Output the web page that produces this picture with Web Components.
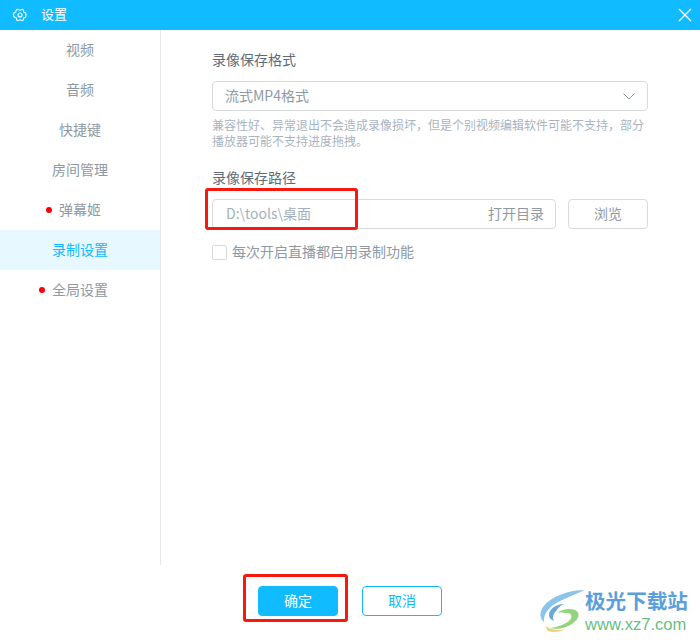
<!DOCTYPE html>
<html lang="zh">
<head>
<meta charset="utf-8">
<title>设置</title>
<style>
    html, body { margin: 0; height: 100%; }
    body { font-family: "Noto Sans CJK SC", "Noto Sans", sans-serif; font-size: 14px; background: #fff; overflow: hidden; }
</style>
</head>
<body>
<settings-dialog>
    <nav-item>视频</nav-item>
    <nav-item>音频</nav-item>
    <nav-item>快捷键</nav-item>
    <nav-item>房间管理</nav-item>
    <nav-item dot>弹幕姬</nav-item>
    <nav-item active>录制设置</nav-item>
    <nav-item dot>全局设置</nav-item>

    <form-group slot="content" label="录像保存格式">
        <format-select value="流式MP4格式"></format-select>
        <p style="margin:6px 0 0;font-size:12px;line-height:16px;color:#a9b4bf;width:436px">兼容性好、异常退出不会造成录像损坏，但是个别视频编辑软件可能不支持，部分播放器可能不支持进度拖拽。</p>
    </form-group>
    <form-group slot="content" label="录像保存路径" style="margin-top:18px">
        <path-picker value="D:\tools\桌面"></path-picker>
        <check-row style="margin-top:15px">每次开启直播都启用录制功能</check-row>
    </form-group>
</settings-dialog>

<script>
class SettingsDialog extends HTMLElement {
    connectedCallback() {
        this.attachShadow({ mode: 'open' });
        this.shadowRoot.innerHTML = `
            <style>
                :host { display: flex; flex-direction: column; position: relative; height: 640px; width: 700px; overflow: hidden; }
                .title { display: flex; align-items: center; box-sizing: border-box; height: 30px; background: #10bcff; color: #fff; flex: none; }
                .gear { margin-left: 13px; width: 14px; height: 14px; }
                .title span { margin-left: 14px; font-size: 13px; line-height: 18px; padding-bottom: 2px; flex: 1; }
                .close { margin-right: 8px; width: 14px; height: 14px; }
                .main { display: flex; height: 535px; flex: none; }
                .side { width: 160px; border-right: 1px solid #e6e8ea; display: flex; flex-direction: column; }
                .content { flex: 1; padding: 19px 52px 0 51px; }
                .foot { flex: 1; display: flex; justify-content: center; gap: 24px; padding-top: 21px; }
                .btn { box-sizing: border-box; width: 80px; height: 30px; border-radius: 4px; border: 1px solid #10bcff; font-size: 14px; display: flex; align-items: center; justify-content: center; padding-bottom: 2px; }
                .ok { background: #10bcff; color: #fff; }
                .cancel { background: #fff; color: #10bcff; }
                .mark { position: absolute; border: 3px solid #f5190f; border-radius: 3px; box-sizing: border-box; }
                .wm { position: absolute; left: 539px; top: 589px; display: flex; }
                .wm div { margin-left: 0; margin-top: -2px; }
                .wm b { display: block; font-size: 20.6px; line-height: 26px; color: #5a9fdc; }
                .wm i { display: block; font: normal 16.6px/18px "Liberation Sans", sans-serif; color: #69bf84; margin-top: 3px; }
            </style>
            <div class="title">
                <svg class="gear" viewBox="0 0 14 14" fill="none" stroke="#fff" stroke-width="1.1">
                    <path d="M4.8 1.3c.7 0 1 .8 2.200.8s1.500-.8 2.200-.8c.6 0 .9.500 1.100.9.300.600 0 1.300.500 1.800.500.500 1.200.400 1.700.800.500.500.500 1.300.500 2.200s0 1.700-.500 2.200c-.500.400-1.200.300-1.700.800s-.200 1.200-.500 1.800c-.200.400-.500.900-1.100.900-.700 0-1-.800-2.200-.800s-1.500.800-2.200.800c-.600 0-.900-.500-1.100-.900-.300-.600 0-1.300-.500-1.800s-1.200-.400-1.700-.800C.5 8.700.5 7.900.5 7s0-1.700.500-2.200c.500-.400 1.200-.300 1.700-.800s.200-1.200.500-1.800c.200-.400.500-.900 1.100-.900z"/>
                    <circle cx="7" cy="7" r="2"/>
                </svg>
                <span>设置</span>
                <svg class="close" viewBox="0 0 14 14" stroke="#fff" stroke-width="1.3"><path d="M1 1l12 12M13 1L1 13"/></svg>
            </div>
            <div class="main">
                <div class="side"><slot></slot></div>
                <div class="content"><slot name="content"></slot></div>
            </div>
            <div class="foot">
                <div class="btn ok">确定</div>
                <div class="btn cancel">取消</div>
            </div>
            <div class="mark" style="left:205px;top:188px;width:153px;height:42px"></div>
            <div class="mark" style="left:243px;top:574px;width:105px;height:48px"></div>
            <div class="wm">
                <svg width="46" height="44" viewBox="0 0 46 44" fill="none">
                    <path d="M46 1C30 1 12 7 4 18c-4 6-3 12 1 15-1-8 5-15 14-20C27 9 37 5 46 1z" fill="#8cc4ec"/>
                    <path d="M25 15c-8 0-15 5-15 11 0 3 2 5 5 6-2-3-1-7 2-10 2-3 5-6 8-7z" fill="#6aa8dc"/>
                    <path d="M18 24c5-4 13-5 18-3 6 3 4 9-3 14-6 4-15 6-22 4 8-1 16-4 20-8 3-4 1-7-3-7-3 0-7-1-10 0z" fill="#93d47c"/>
                    <path d="M7 37c5 4 13 5 20 3-6 3-13 4-18 2-1-1-2-3-2-5z" fill="#ead27a"/>
                </svg>
                <div><b>极光下载站</b><i>www.xz7.com</i></div>
            </div>
        `;
    }
}

class NavItem extends HTMLElement {
    connectedCallback() {
        this.attachShadow({ mode: 'open' });
        this.shadowRoot.innerHTML = `
            <style>
                :host { display: flex; align-items: center; justify-content: center; box-sizing: border-box; height: 40px; padding-bottom: 2px; font-size: 14px; color: #8e99a3; }
                :host([active]) { background: #e7f8ff; color: #10bcff; }
                .wrap { position: relative; }
                .dot { position: absolute; left: -13px; top: 8px; width: 6px; height: 6px; border-radius: 50%; background: #f8000a; }
            </style>
            <div class="wrap">${this.hasAttribute('dot') ? '<span class="dot"></span>' : ''}<slot></slot></div>
        `;
    }
}

class FormGroup extends HTMLElement {
    connectedCallback() {
        this.attachShadow({ mode: 'open' });
        this.shadowRoot.innerHTML = `
            <style>
                :host { display: block; }
                .label { font-size: 14px; line-height: 20px; color: #5f6c78; margin-bottom: 12px; }
            </style>
            <div class="label">${this.getAttribute('label')}</div>
            <slot></slot>
        `;
    }
}

class FormatSelect extends HTMLElement {
    connectedCallback() {
        this.attachShadow({ mode: 'open' });
        this.shadowRoot.innerHTML = `
            <style>
                :host { display: flex; align-items: center; justify-content: space-between; box-sizing: border-box; width: 436px; height: 30px; border: 1px solid #d7dbde; border-radius: 4px; padding: 0 12px; font-size: 14px; color: #8e99a3; }
                span { padding-bottom: 2px; }
            </style>
            <span>${this.getAttribute('value')}</span>
            <svg width="12" height="7" viewBox="0 0 12 7" fill="none" stroke="#8e99a3" stroke-width="1"><path d="M.5.5L6 6l5.500-5.500"/></svg>
        `;
    }
}

class PathPicker extends HTMLElement {
    connectedCallback() {
        this.attachShadow({ mode: 'open' });
        this.shadowRoot.innerHTML = `
            <style>
                :host { display: flex; gap: 12px; width: 436px; font-size: 14px; }
                .input, .browse { box-sizing: border-box; height: 30px; border: 1px solid #d7dbde; border-radius: 4px; display: flex; align-items: center; padding-bottom: 2px; }
                .input { flex: 1; justify-content: space-between; padding-left: 13px; padding-right: 11px; }
                .value { color: #a3afba; }
                .open { color: #8e99a3; }
                .browse { width: 80px; justify-content: center; color: #8e99a3; }
            </style>
            <div class="input"><span class="value">${this.getAttribute('value')}</span><span class="open">打开目录</span></div>
            <div class="browse">浏览</div>
        `;
    }
}

class CheckRow extends HTMLElement {
    connectedCallback() {
        this.attachShadow({ mode: 'open' });
        this.shadowRoot.innerHTML = `
            <style>
                :host { display: flex; align-items: center; gap: 5px; height: 16px; font-size: 14px; color: #8e99a3; }
                .box { box-sizing: border-box; width: 15px; height: 15px; border: 1px solid #d7dbde; border-radius: 2px; }
                .text { margin-top: -2px; }
            </style>
            <span class="box"></span><span class="text"><slot></slot></span>
        `;
    }
}

customElements.define('settings-dialog', SettingsDialog);
customElements.define('nav-item', NavItem);
customElements.define('form-group', FormGroup);
customElements.define('format-select', FormatSelect);
customElements.define('path-picker', PathPicker);
customElements.define('check-row', CheckRow);
</script>
</body>
</html>
